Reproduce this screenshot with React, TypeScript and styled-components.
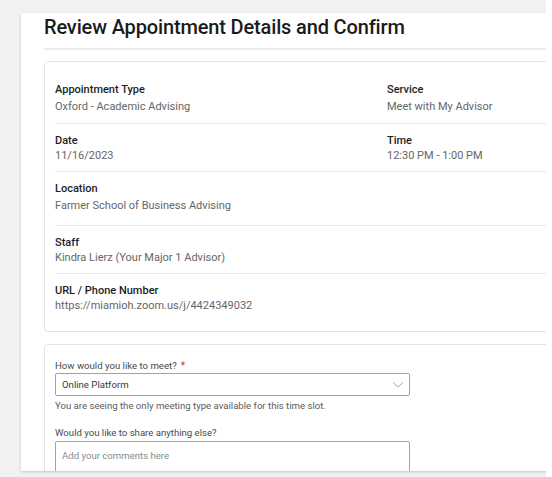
import React from "react";
import styled, { createGlobalStyle } from "styled-components";

const Global = createGlobalStyle`
  html, body { margin: 0; padding: 0; background: #ffffff; }
  body { font-family: Roboto, "Noto Sans", Arial, sans-serif; -webkit-font-smoothing: antialiased; }
  * { box-sizing: border-box; }
`;

const Page = styled.div`
  width: 546px;
  height: 477px;
  background: #f1f1f1;
  overflow: hidden;
  padding: 13px 0 0 21px;
`;

const Card = styled.div`
  width: 740px;
  height: 458px;
  background: #ffffff;
  box-shadow: 0 1px 3px rgba(0, 0, 0, 0.12), 0 1px 2px rgba(0, 0, 0, 0.08);
  padding: 0 23px;
  overflow: hidden;
`;

const Title = styled.h1`
  margin: 0;
  font-size: 20px;
  line-height: 28px;
  font-weight: 500;
  color: #1b1b1b;
  letter-spacing: -0.15px;
`;

const Rule = styled.div`
  height: 2px;
  background: #ececec;
  margin: 7px 0 11px;
`;

const Panel = styled.div<{ $pad: string }>`
  border: 1px solid #e4e4e4;
  border-radius: 4px;
  padding: ${(p) => p.$pad};
`;

const Row = styled.div<{ $pb: number; $last?: boolean }>`
  display: grid;
  grid-template-columns: 332px 1fr;
  padding: 9px 0 ${(p) => p.$pb}px;
  border-bottom: ${(p) => (p.$last ? "none" : "1px solid #e6e6e6")};
`;

const Field = styled.div<{ $gap: number }>`
  display: flex;
  flex-direction: column;
  gap: ${(p) => p.$gap}px;
`;

const Label = styled.div`
  font-size: 11px;
  line-height: 15px;
  font-weight: 500;
  color: #1e1e1e;
`;

const Value = styled.div`
  font-size: 11px;
  line-height: 15px;
  font-weight: 400;
  color: #666666;
`;

const FormPanel = styled(Panel)`
  margin-top: 12px;
  height: 200px;
`;

const FieldLabel = styled.div`
  font-size: 9.6px;
  line-height: 14px;
  color: #4a4a4a;
`;

const Req = styled.span`
  color: #d6332c;
  margin-left: 4px;
  font-size: 10px;
`;

const SelectBox = styled.div`
  width: 355px;
  height: 23px;
  border: 1px solid #8ea3c9;
  border-radius: 2px;
  display: flex;
  align-items: center;
  justify-content: space-between;
  padding: 0 5px 0 6px;
  font-size: 9.6px;
  color: #3a3a3a;
`;

const Help = styled.div`
  margin-top: 3px;
  font-size: 9.6px;
  line-height: 14px;
  color: #5c5c5c;
`;

const Group = styled.div<{ $top?: number }>`
  margin-top: ${(p) => p.$top ?? 0}px;
`;

const TextArea = styled.div`
  margin-top: 1px;
  width: 355px;
  height: 60px;
  border: 1px solid #8ea3c9;
  border-radius: 2px;
  padding: 7px 6px;
  font-size: 9.6px;
  line-height: 14px;
  color: #8a8a8a;
`;

type R = { a: [string, string]; b?: [string, string]; gap: number; pb: number; last?: boolean };

const rows: R[] = [
  { a: ["Appointment Type", "Oxford - Academic Advising"], b: ["Service", "Meet with My Advisor"], gap: 2, pb: 9 },
  { a: ["Date", "11/16/2023"], b: ["Time", "12:30 PM - 1:00 PM"], gap: 0, pb: 8 },
  { a: ["Location", "Farmer School of Business Advising"], gap: 2, pb: 12 },
  { a: ["Staff", "Kindra Lierz (Your Major 1 Advisor)"], gap: 0, pb: 8 },
  { a: ["URL / Phone Number", "https://miamioh.zoom.us/j/4424349032"], gap: 0, pb: 8, last: true },
];

export default function App() {
  return (
    <>
      <Global />
      <Page>
        <Card>
          <Title>Review Appointment Details and Confirm</Title>
          <Rule />
          <Panel $pad="11px 10px 10px 10px">
            {rows.map((r, i) => (
              <Row key={i} $pb={r.pb} $last={r.last}>
                <Field $gap={r.gap}>
                  <Label>{r.a[0]}</Label>
                  <Value>{r.a[1]}</Value>
                </Field>
                {r.b ? (
                  <Field $gap={r.gap}>
                    <Label>{r.b[0]}</Label>
                    <Value>{r.b[1]}</Value>
                  </Field>
                ) : (
                  <div />
                )}
              </Row>
            ))}
          </Panel>
          <FormPanel $pad="14px 10px">
            <FieldLabel>
              How would you like to meet?<Req>*</Req>
            </FieldLabel>
            <SelectBox>
              <span>Online Platform</span>
              <svg width="12" height="8" viewBox="0 0 12 8">
                <path d="M1 1.5 L6 6 L11 1.5" fill="none" stroke="#a9a9a9" strokeWidth="1" />
              </svg>
            </SelectBox>
            <Help>You are seeing the only meeting type available for this time slot.</Help>
            <Group $top={13}>
              <FieldLabel>Would you like to share anything else?</FieldLabel>
              <TextArea>Add your comments here</TextArea>
            </Group>
          </FormPanel>
        </Card>
      </Page>
    </>
  );
}
